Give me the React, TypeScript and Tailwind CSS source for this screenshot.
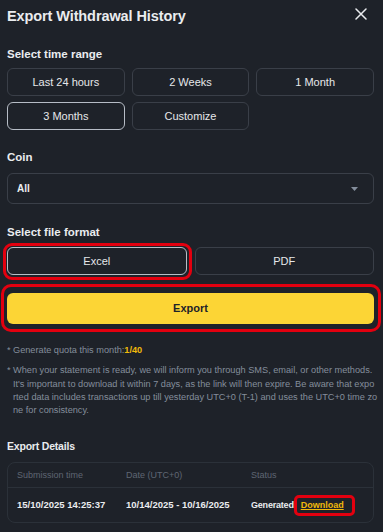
import React, { useState } from 'react';

const ranges = ['Last 24 hours', '2 Weeks', '1 Month', '3 Months', 'Customize'];

export default function App() {
  const [range, setRange] = useState('3 Months');
  const [format, setFormat] = useState<'Excel' | 'PDF'>('Excel');

  return (
    <div className="min-h-screen w-full bg-[#1e2229] pl-[7px] pr-[9px] font-['Liberation_Sans',Arial,sans-serif] text-[#eaecef]">
      {/* Header */}
      <div className="flex h-[32px] items-center justify-between">
        <h1 className="text-[14.5px] font-bold leading-[20px] tracking-[-0.1px]">Export Withdrawal History</h1>
        <button className="mr-[7px] -mt-[5px] text-[#eaecef]" aria-label="Close">
          <svg width="12" height="12" viewBox="0 0 12 12" fill="none" stroke="currentColor" strokeWidth="1.5" strokeLinecap="round">
            <path d="M1 1L11 11M11 1L1 11" />
          </svg>
        </button>
      </div>

      {/* Time range */}
      <p className="mt-[14px] text-[11.5px] font-bold leading-[16px]">Select time range</p>
      <div className="mt-[6px] grid grid-cols-3 gap-x-[7px] gap-y-[6px]">
        {ranges.map(r => (
          <button
            key={r}
            onClick={() => setRange(r)}
            className={
              'h-[28px] rounded-[6px] border text-[11px] leading-none text-[#e6e8ea] ' +
              (range === r ? 'border-[#b7bdc6]' : 'border-[#3a3f48]')
            }
          >
            {r}
          </button>
        ))}
      </div>

      {/* Coin */}
      <p className="mt-[19px] text-[11.5px] font-bold leading-[16px]">Coin</p>
      <div className="mt-[8px] flex h-[31px] items-center justify-between rounded-[6px] border border-[#3a3f48] pl-[9px] pr-[15px]">
        <span className="text-[10px] font-bold">All</span>
        <svg width="7" height="4" viewBox="0 0 7 4" className="text-[#848e9c]">
          <path d="M0 0H7L3.5 4Z" fill="currentColor" />
        </svg>
      </div>

      {/* File format */}
      <p className="mt-[20px] text-[11.5px] font-bold leading-[16px]">Select file format</p>
      <div className="mt-[7px] grid grid-cols-2 gap-x-[8px]">
        {(['Excel', 'PDF'] as const).map(f => (
          <div key={f} className="relative">
            <button
              onClick={() => setFormat(f)}
              className={
                'h-[28px] w-full rounded-[6px] border text-[11px] leading-none text-[#e6e8ea] ' +
                (format === f ? 'border-[#b7bdc6]' : 'border-[#3a3f48]')
              }
            >
              {f}
            </button>
            {f === 'Excel' && (
              <div className="pointer-events-none absolute -bottom-[5px] -left-[4px] -right-[5px] -top-[4px] rounded-[9px] border-[3px] border-[#e3000f]" />
            )}
          </div>
        ))}
      </div>

      {/* Export */}
      <div className="relative mt-[18px]">
        <button className="h-[31px] w-full rounded-[6px] bg-[#fcd535] text-[11px] font-bold text-[#1e2329]">Export</button>
        <div className="pointer-events-none absolute -bottom-[8px] -left-[6px] -right-[7px] -top-[9px] rounded-[10px] border-[3px] border-[#e3000f]" />
      </div>

      {/* Notes */}
      <div className="mt-[20px] flex text-[9.2px] leading-[13.3px] text-[#848e9c]">
        <span className="w-[6px] shrink-0">*</span>
        <span>
          Generate quota this month:<span className="font-bold text-[#f0b90b]">1/40</span>
        </span>
      </div>
      <div className="mt-[7px] flex text-[9.2px] leading-[13.3px] text-[#848e9c]">
        <span className="w-[6px] shrink-0">*</span>
        <p className="whitespace-nowrap">
          When your statement is ready, we will inform you through SMS, email, or other methods.
          <br />
          It's important to download it within 7 days, as the link will then expire. Be aware that expo
          <br />
          rted data includes transactions up till yesterday UTC+0 (T-1) and uses the UTC+0 time zo
          <br />
          ne for consistency.
        </p>
      </div>

      {/* Export details */}
      <p className="mt-[21px] text-[10.5px] font-bold leading-[16px] tracking-[-0.2px]">Export Details</p>
      <div className="mt-[8px] rounded-[8px] border border-[#2b3139]">
        <div className="grid h-[25px] grid-cols-[109px_125px_1fr] items-center border-b border-[#2b3139] pl-[9px] text-[9px] text-[#5e6673]">
          <span>Submission time</span>
          <span>Date (UTC+0)</span>
          <span>Status</span>
        </div>
        <div className="grid h-[34px] grid-cols-[109px_125px_1fr] items-center pl-[9px] text-[9.5px] font-bold">
          <span>15/10/2025 14:25:37</span>
          <span>10/14/2025 - 10/16/2025</span>
          <div className="flex items-center">
            <span className="text-[9px] tracking-[-0.2px]">Generated</span>
            <span className="relative ml-[7px] text-[9px] leading-[12px] text-[#f0b90b] underline">
              Download
              <span className="pointer-events-none absolute -bottom-[5px] -left-[7px] -right-[11px] -top-[4px] rounded-[5px] border-[3px] border-[#e3000f]" />
            </span>
          </div>
        </div>
      </div>
    </div>
  );
}
